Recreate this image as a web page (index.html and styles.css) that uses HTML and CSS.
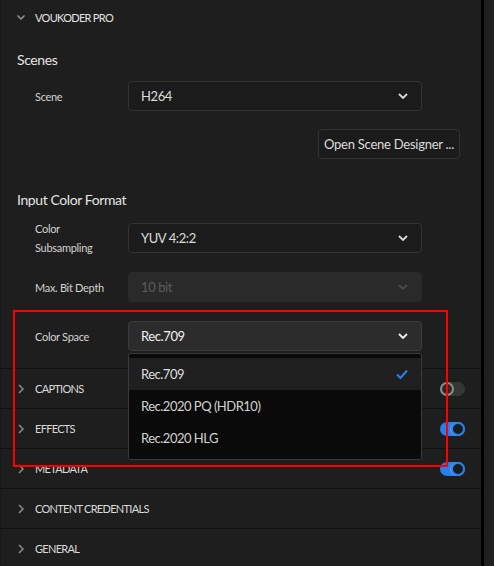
FILE: index.html
```html
<!DOCTYPE html>
<html lang="en">
<head>
  <meta charset="UTF-8">
  <title>Export Settings</title>
  <link rel="stylesheet" href="styles.css">
</head>
<body>
<div class="panel">
  <!-- Voukoder Pro plugin section (expanded) -->
  <div class="section-head open">
    <svg class="chev" width="10" height="10" viewBox="0 0 10 10"><path d="M1.5 3.5 L5 7 L8.5 3.5" fill="none" stroke="#9a9a9a" stroke-width="1.4"/></svg>
    <span>VOUKODER PRO</span>
  </div>

  <div class="group">
    <h3 class="group-title">Scenes</h3>
    <div class="field">
      <label>Scene</label>
      <div class="select">
        <span>H264</span>
        <svg width="12" height="8" viewBox="0 0 12 8"><path d="M2 2 L6 6 L10 2" fill="none" stroke="#d8d8d8" stroke-width="1.8"/></svg>
      </div>
    </div>
    <div class="btn-row">
      <button class="btn">Open Scene Designer ...</button>
    </div>
  </div>

  <div class="group">
    <h3 class="group-title second">Input Color Format</h3>
    <div class="field">
      <label>Color<br>Subsampling</label>
      <div class="select">
        <span>YUV 4:2:2</span>
        <svg width="12" height="8" viewBox="0 0 12 8"><path d="M2 2 L6 6 L10 2" fill="none" stroke="#d8d8d8" stroke-width="1.8"/></svg>
      </div>
    </div>
    <div class="field">
      <label>Max. Bit Depth</label>
      <div class="select disabled">
        <span>10 bit</span>
        <svg width="12" height="8" viewBox="0 0 12 8"><path d="M2 2 L6 6 L10 2" fill="none" stroke="#4a4a4a" stroke-width="1.8"/></svg>
      </div>
    </div>
    <div class="field">
      <label>Color Space</label>
      <div class="select active">
        <span>Rec.709</span>
        <svg width="12" height="8" viewBox="0 0 12 8"><path d="M2 2 L6 6 L10 2" fill="none" stroke="#f2f2f2" stroke-width="1.8"/></svg>
        <ul class="menu">
          <li class="selected">Rec.709
            <svg width="14" height="12" viewBox="0 0 14 12"><path d="M2 6.5 L5.5 10 L12 2.5" fill="none" stroke="#2680eb" stroke-width="2"/></svg>
          </li>
          <li>Rec.2020 PQ (HDR10)</li>
          <li>Rec.2020 HLG</li>
        </ul>
      </div>
    </div>
  </div>

  <!-- collapsed sections -->
  <div class="rows">
    <div class="row">
      <svg class="chev" width="10" height="12" viewBox="0 0 10 12"><path d="M3 2 L7 6 L3 10" fill="none" stroke="#8a8a8a" stroke-width="1.5"/></svg>
      <span>CAPTIONS</span>
      <span class="toggle"></span>
    </div>
    <div class="row">
      <svg class="chev" width="10" height="12" viewBox="0 0 10 12"><path d="M3 2 L7 6 L3 10" fill="none" stroke="#8a8a8a" stroke-width="1.5"/></svg>
      <span>EFFECTS</span>
      <span class="toggle on"></span>
    </div>
    <div class="row">
      <svg class="chev" width="10" height="12" viewBox="0 0 10 12"><path d="M3 2 L7 6 L3 10" fill="none" stroke="#8a8a8a" stroke-width="1.5"/></svg>
      <span>METADATA</span>
      <span class="toggle on"></span>
    </div>
    <div class="row">
      <svg class="chev" width="10" height="12" viewBox="0 0 10 12"><path d="M3 2 L7 6 L3 10" fill="none" stroke="#8a8a8a" stroke-width="1.5"/></svg>
      <span>CONTENT CREDENTIALS</span>
    </div>
    <div class="row">
      <svg class="chev" width="10" height="12" viewBox="0 0 10 12"><path d="M3 2 L7 6 L3 10" fill="none" stroke="#8a8a8a" stroke-width="1.5"/></svg>
      <span>GENERAL</span>
    </div>
  </div>

  <div class="highlight"></div>
</div>
<div class="split"></div>
<div class="side"></div>
</body>
</html>
```

FILE: styles.css
```css
body {
  margin: 0;
  height: 566px;
  display: flex;
  background-color: #1e1e1e;
  color: #d6d6d6;
  font-family: Lato, "Noto Sans", sans-serif;
  overflow: hidden;
}
.panel {
  position: relative;
  width: 480px;
  border-left: 1px solid #181818;
  background-color: #1e1e1e;
}
.split {
  width: 3px;
  background-color: #000;
}
.side {
  flex: 1;
  background-color: #1f1f1f;
}

.section-head {
  height: 34px;
  display: flex;
  align-items: center;
  padding-left: 15px;
  font-size: 11px;
  letter-spacing: -0.7px;
  color: #e2e2e2;
}
.section-head .chev {
  margin-right: 9px;
}

.group-title {
  margin: 16px 0 0 16px;
  height: 20px;
  line-height: 20px;
  font-size: 14px;
  font-weight: normal;
  letter-spacing: -0.4px;
  color: #e4e4e4;
}
.group-title.second {
  margin-top: 31px;
}

.field {
  height: 30px;
  display: flex;
  align-items: center;
  margin-top: 11px;
  padding-left: 34px;
}
.group-title.second + .field {
  margin-top: 13px;
}
.field + .field {
  margin-top: 19px;
}
.field label {
  width: 93px;
  font-size: 11px;
  line-height: 19px;
  letter-spacing: -0.3px;
  color: #d2d2d2;
}
.select {
  position: relative;
  width: 294px;
  height: 30px;
  box-sizing: border-box;
  display: flex;
  align-items: center;
  justify-content: space-between;
  padding: 0 12px 0 12px;
  background-color: #1b1b1b;
  border: 1px solid #333;
  border-radius: 4px;
  font-size: 13px;
  letter-spacing: -0.4px;
  color: #dcdcdc;
}
.select.disabled {
  background-color: #2a2a2a;
  border-color: #2a2a2a;
  color: #5c5c5c;
}
.select.active {
  background-color: #2c2c2c;
  border-color: #3c3c3c;
  color: #f0f0f0;
}

.btn-row {
  display: flex;
  justify-content: flex-end;
  padding-right: 21px;
  margin-top: 18px;
}
.btn {
  height: 30px;
  padding: 0 5px;
  background-color: #1b1b1b;
  border: 1px solid #333;
  border-radius: 4px;
  color: #dcdcdc;
  font-family: inherit;
  font-size: 13px;
  letter-spacing: -0.25px;
}

.menu {
  position: absolute;
  left: -1px;
  top: 31px;
  width: 294px;
  box-sizing: border-box;
  margin: 0;
  padding: 4px 0 5px;
  list-style: none;
  background-color: #0a0a0a;
  border: 1px solid #3a3a3a;
  border-radius: 3px;
  z-index: 2;
}
.menu li {
  height: 32px;
  display: flex;
  align-items: center;
  justify-content: space-between;
  padding: 0 12px;
  font-size: 13px;
  letter-spacing: -0.5px;
  color: #d2d2d2;
}
.menu li.selected {
  background-color: #1f1f1f;
  color: #dedede;
}

.rows {
  margin-top: 17px;
}
.row {
  height: 40px;
  box-sizing: border-box;
  border-top: 1px solid #111;
  display: flex;
  align-items: center;
  padding-left: 15px;
  font-size: 11px;
  letter-spacing: -0.7px;
  color: #dadada;
}
.row .chev {
  margin-right: 9px;
}
.toggle {
  position: relative;
  margin-left: auto;
  margin-right: 16px;
  width: 25px;
  height: 14px;
  border-radius: 7px;
  background-color: #363636;
}
.toggle::after {
  content: "";
  position: absolute;
  left: 0;
  top: 0;
  width: 14px;
  height: 14px;
  box-sizing: border-box;
  border-radius: 50%;
  border: 2px solid #8c8c8c;
  background-color: #2a2a2a;
}
.toggle.on {
  background-color: #2680eb;
}
.toggle.on::after {
  left: 11px;
  border-color: #2680eb;
  background-color: #1b1b1b;
  box-shadow: -1px 0 0 #5aa0f0;
}

/* red annotation box drawn over the panel */
.highlight {
  position: absolute;
  left: 12px;
  top: 310px;
  width: 431px;
  height: 153px;
  border: 2px solid #ff0000;
  z-index: 3;
}
```
